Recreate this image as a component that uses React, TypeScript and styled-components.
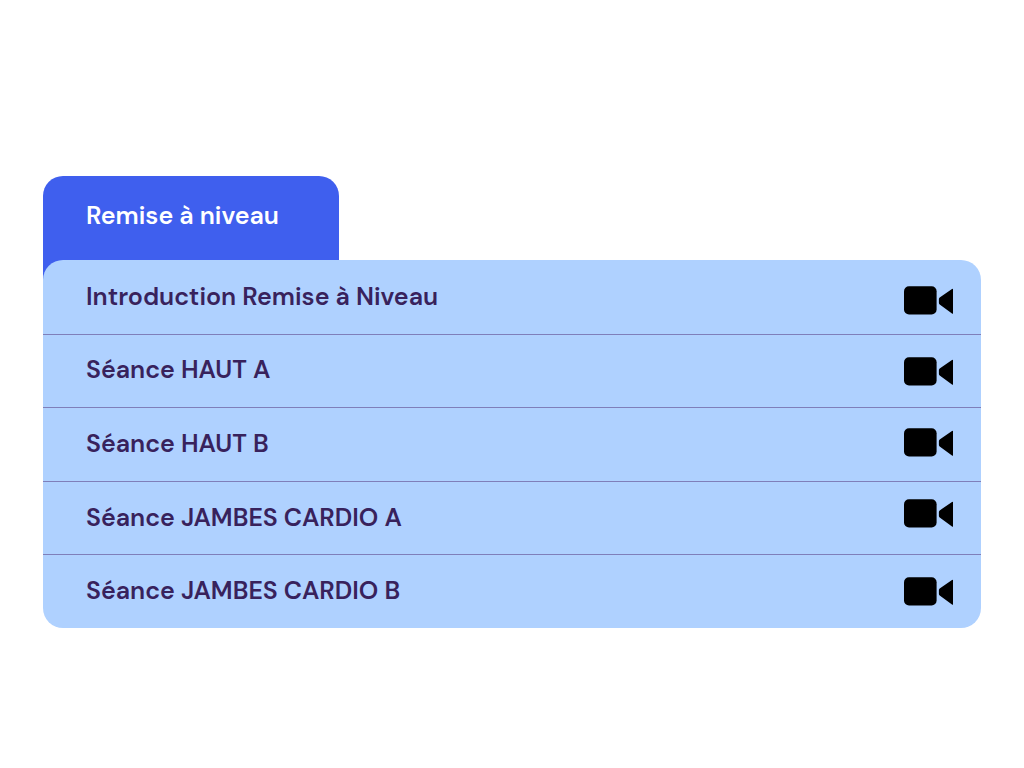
import React from "react";
import styled, { createGlobalStyle } from "styled-components";

const GlobalStyle = createGlobalStyle`
  * { box-sizing: border-box; }
  body {
    margin: 0;
    background: #ffffff;
    font-family: "DM Sans", Inter, "Liberation Sans", sans-serif;
  }
`;

const Page = styled.main`
  padding: 176px 43px 48px;
`;

const Tab = styled.header`
  width: 296px;
  max-width: 100%;
  padding: 24px 43px 48px;
  border-radius: 20px 20px 0 0;
  background: #3f5fee;
`;

const Title = styled.h1`
  margin: 0;
  font-size: 25px;
  line-height: 32px;
  font-weight: 600;
  color: #ffffff;
  white-space: nowrap;
`;

const Panel = styled.section`
  position: relative;
  display: grid;
  grid-template-columns: 1fr auto;
  min-height: 368px;
  margin-top: -20px;
  border-radius: 20px;
  background: #afd1ff;
`;

const Sessions = styled.ul`
  grid-area: 1 / 1 / 2 / 3;
  display: grid;
  grid-auto-rows: 1fr;
  margin: 0;
  padding: 0;
  list-style: none;
`;

const Session = styled.li`
  display: flex;
  align-items: center;
  padding: 0 120px 0 43px;
  font-size: 25px;
  line-height: 32px;
  font-weight: 600;
  color: #38225c;

  & + & {
    padding-bottom: 1px;
    border-top: 1px solid #7f7fba;
  }
`;

const Videos = styled.div`
  grid-area: 1 / 2 / 2 / 3;
  display: flex;
  flex-direction: column;
  gap: 42px;
  padding: 26px 28px 22px 0;
`;

const VideoButton = styled.button`
  display: block;
  padding: 0;
  border: 0;
  background: none;
  color: #000000;
  cursor: pointer;

  &:last-child {
    margin-top: auto;
  }
`;

const Camera = styled.svg`
  display: block;
  width: 49px;
  height: 29px;
  fill: currentColor;
`;

const sessions = [
  "Introduction Remise à Niveau",
  "Séance HAUT A",
  "Séance HAUT B",
  "Séance JAMBES CARDIO A",
  "Séance JAMBES CARDIO B",
];

export default function App() {
  return (
    <>
      <GlobalStyle />
      <Page>
        <Tab>
          <Title>Remise à niveau</Title>
        </Tab>
        <Panel>
          <Sessions>
            {sessions.map((name) => (
              <Session key={name}>{name}</Session>
            ))}
          </Sessions>
          <Videos>
            {sessions.map((name) => (
              <VideoButton key={name} type="button" aria-label={name}>
                <Camera viewBox="0 0 49 29" aria-hidden="true">
                  <rect x="0" y="0.2" width="32.6" height="28.3" rx="5" />
                  <path d="M48 2.9Q49 2.2 49 3.3V27.2Q49 28.3 48 27.6L35.7 18.4Q34.9 17.8 34.9 16.8V13Q34.9 12 35.7 11.4Z" />
                </Camera>
              </VideoButton>
            ))}
          </Videos>
        </Panel>
      </Page>
    </>
  );
}
